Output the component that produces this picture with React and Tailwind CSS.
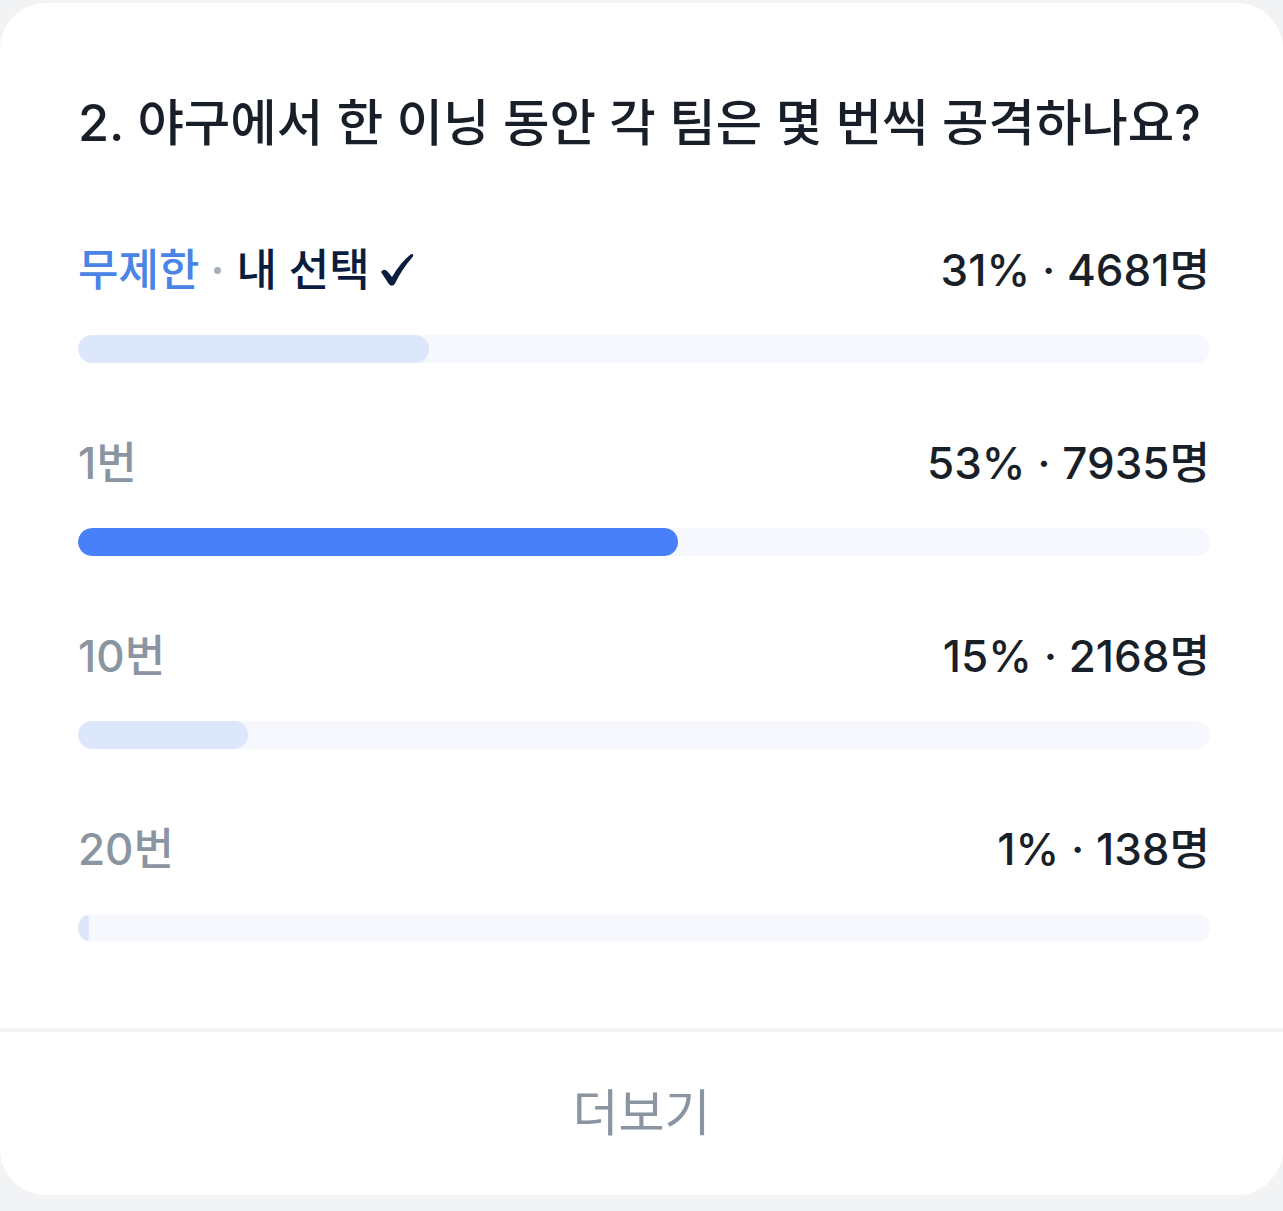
import React from "react";

const rows = [
  { label: "무제한", pct: 31, count: "4681", mine: true },
  { label: "1번", pct: 53, count: "7935", top: true },
  { label: "10번", pct: 15, count: "2168" },
  { label: "20번", pct: 1, count: "138" },
];

const Check = () => (
  <svg viewBox="0 0 36 34" className="ml-[9px] h-[34px] w-[36px]" aria-hidden="true">
    <path
      d="M2 19 Q5 15 8.5 18.5 L13 24 Q21 10 31.5 1.5 Q35 0 34 3.5 Q23 16 16 30.5 Q13 35 9.5 30.5 Z"
      fill="#0b1d3f"
    />
  </svg>
);

const PollRow = ({ label, pct, count, mine, top }) => (
  <div className="flex flex-col">
    <div className="flex h-[56px] items-center justify-between text-[44px] font-medium leading-[56px]">
      <div className="flex items-center">
        <span className={mine ? "text-[#4a84e6]" : "text-[#8b95a1]"}>{label}</span>
        {mine && (
          <>
            <span className="mx-[15px] h-[7px] w-[7px] rounded-full bg-[#a7aeb8]" />
            <span className="text-[#0b1d3f]">내 선택</span>
            <Check />
          </>
        )}
      </div>
      <span className="text-[#191f28]">
        {pct}% · {count}명
      </span>
    </div>
    <div className="mt-[37px] h-[28px] w-full overflow-hidden rounded-full bg-[#f6f8fd]">
      <div
        className={`h-full rounded-full ${top ? "bg-[#4880fa]" : "bg-[#dce7fc]"}`}
        style={{ width: `${pct}%` }}
      />
    </div>
  </div>
);

export default function App() {
  return (
    <div
      className="min-h-screen bg-[#f2f3f5] pt-[3px]"
      style={{ fontFamily: 'Inter, "Noto Sans CJK KR", sans-serif' }}
    >
      <div className="overflow-hidden rounded-[46px] bg-white">
        <div className="pb-[86px] pl-[78px] pr-[73px] pt-[90px]">
          <h2 className="text-[50.5px] font-medium leading-[60px] text-[#191f28]">
            2. 야구에서 한 이닝 동안 각 팀은 몇 번씩 공격하나요?
          </h2>
          <div className="mt-[89px] flex flex-col gap-[72px]">
            {rows.map((r) => (
              <PollRow key={r.label} {...r} />
            ))}
          </div>
        </div>
        <div className="h-[4px] bg-[#f2f3f5]" />
        <div className="flex h-[163px] items-center justify-center">
          <span className="text-[50px] font-normal text-[#8b95a1]">더보기</span>
        </div>
      </div>
    </div>
  );
}
